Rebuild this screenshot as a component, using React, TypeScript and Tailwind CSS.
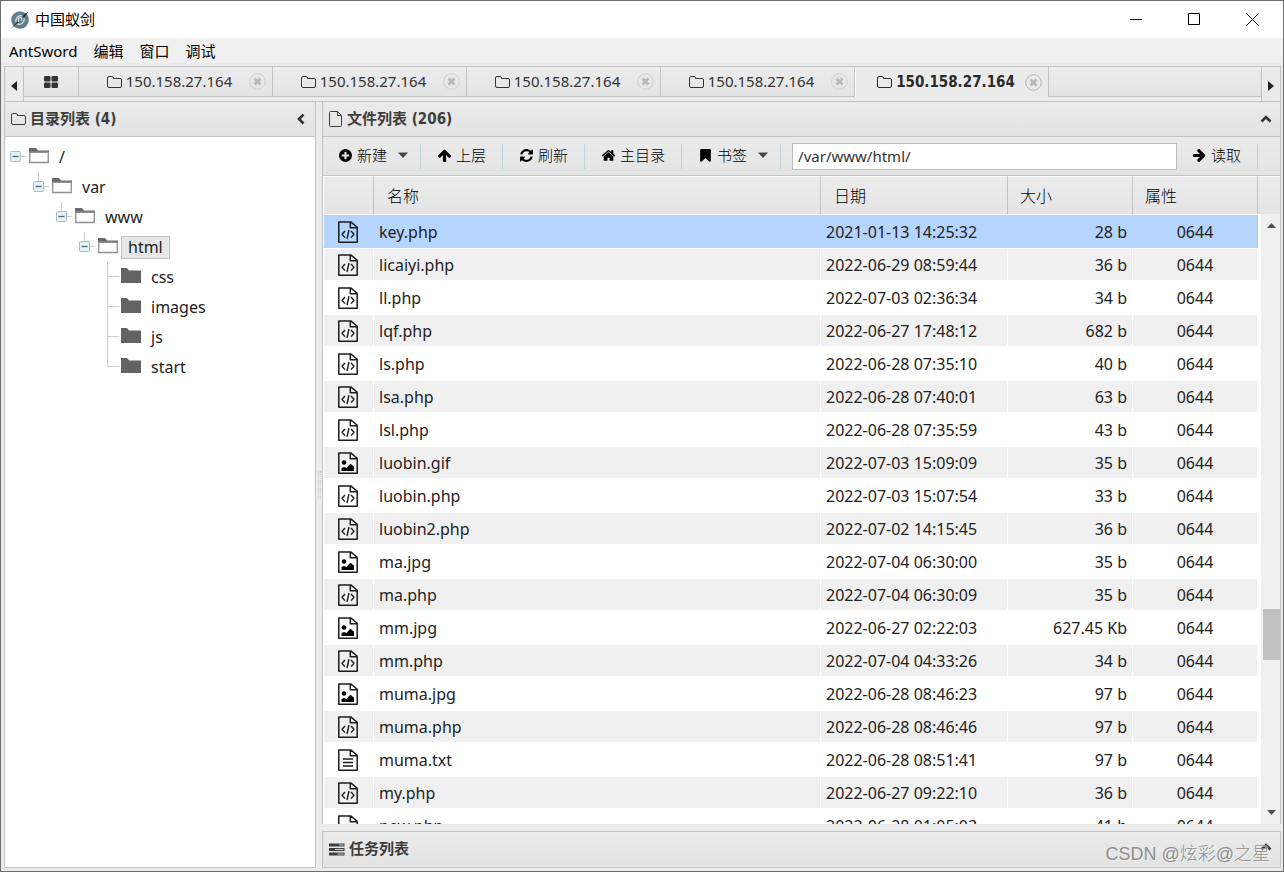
import { useState } from 'react';
import type { ReactNode } from 'react';

type FileKind = 'code' | 'image' | 'text';
type FileRow = { name: string; date: string; size: string; kind: FileKind };

const files: FileRow[] = [
  { name: 'key.php', date: '2021-01-13 14:25:32', size: '28 b', kind: 'code' },
  { name: 'licaiyi.php', date: '2022-06-29 08:59:44', size: '36 b', kind: 'code' },
  { name: 'll.php', date: '2022-07-03 02:36:34', size: '34 b', kind: 'code' },
  { name: 'lqf.php', date: '2022-06-27 17:48:12', size: '682 b', kind: 'code' },
  { name: 'ls.php', date: '2022-06-28 07:35:10', size: '40 b', kind: 'code' },
  { name: 'lsa.php', date: '2022-06-28 07:40:01', size: '63 b', kind: 'code' },
  { name: 'lsl.php', date: '2022-06-28 07:35:59', size: '43 b', kind: 'code' },
  { name: 'luobin.gif', date: '2022-07-03 15:09:09', size: '35 b', kind: 'image' },
  { name: 'luobin.php', date: '2022-07-03 15:07:54', size: '33 b', kind: 'code' },
  { name: 'luobin2.php', date: '2022-07-02 14:15:45', size: '36 b', kind: 'code' },
  { name: 'ma.jpg', date: '2022-07-04 06:30:00', size: '35 b', kind: 'image' },
  { name: 'ma.php', date: '2022-07-04 06:30:09', size: '35 b', kind: 'code' },
  { name: 'mm.jpg', date: '2022-06-27 02:22:03', size: '627.45 Kb', kind: 'image' },
  { name: 'mm.php', date: '2022-07-04 04:33:26', size: '34 b', kind: 'code' },
  { name: 'muma.jpg', date: '2022-06-28 08:46:23', size: '97 b', kind: 'image' },
  { name: 'muma.php', date: '2022-06-28 08:46:46', size: '97 b', kind: 'code' },
  { name: 'muma.txt', date: '2022-06-28 08:51:41', size: '97 b', kind: 'text' },
  { name: 'my.php', date: '2022-06-27 09:22:10', size: '36 b', kind: 'code' },
  { name: 'new.php', date: '2022-06-28 01:05:03', size: '41 b', kind: 'code' },
];

const tree = [
  { name: '/', indent: 'pl-1', open: true },
  { name: 'var', indent: 'pl-[27px]', open: true },
  { name: 'www', indent: 'pl-[50px]', open: true },
  { name: 'html', indent: 'pl-[73px]', open: true },
  { name: 'css', indent: 'pl-[96px]', open: false },
  { name: 'images', indent: 'pl-[96px]', open: false },
  { name: 'js', indent: 'pl-[96px]', open: false },
  { name: 'start', indent: 'pl-[96px]', open: false },
];

const tabs = ['150.158.27.164', '150.158.27.164', '150.158.27.164', '150.158.27.164', '150.158.27.164'];

const headFont = "font-['DejaVu_Sans_Condensed','DejaVu_Sans','Noto_Sans_CJK_SC',sans-serif]";

// Font Awesome 4 glyphs on their 1792 grid
const glyphs = {
  plus: 'M1344 960v-128q0-26-19-45t-45-19h-256v-256q0-26-19-45t-45-19h-128q-26 0-45 19t-19 45v256h-256q-26 0-45 19t-19 45v128q0 26 19 45t45 19h256v256q0 26 19 45t45 19h128q26 0 45-19t19-45v-256h256q26 0 45-19t19-45zm320-64q0 209-103 385.5t-279.5 279.5-385.5 103-385.5-103-279.5-279.5-103-385.5 103-385.5 279.5-279.5 385.5-103 385.5 103 279.5 279.5 103 385.5z',
  up: 'M1675 971q0 51-37 90l-75 75q-38 38-91 38-54 0-90-38l-294-293v704q0 52-37.5 84.5t-90.5 32.5h-128q-53 0-90.5-32.5t-37.5-84.5v-704l-294 293q-36 38-90 38t-90-38l-75-75q-38-38-38-90 0-53 38-91l651-651q35-37 90-37 54 0 91 37l651 651q37 39 37 91z',
  refresh: 'M1639 1056q0 5-1 7-64 268-268 434.5t-478 166.5q-146 0-282.5-55t-243.5-157l-129 129q-19 19-45 19t-45-19-19-45v-448q0-26 19-45t45-19h448q26 0 45 19t19 45-19 45l-137 137q71 66 161 102t187 36q134 0 250-65t186-179q11-17 53-117 8-23 30-23h192q13 0 22.5 9.5t9.5 22.5zm25-800v448q0 26-19 45t-45 19h-448q-26 0-45-19t-19-45 19-45l138-138q-148-137-349-137-134 0-250 65t-186 179q-11 17-53 117-8 23-30 23h-199q-13 0-22.5-9.5t-9.5-22.5v-7q65-268 270-434.5t480-166.5q146 0 284 55.5t245 156.5l130-129q19-19 45-19t45 19 19 45z',
  home: 'M1472 992v480q0 26-19 45t-45 19h-384v-384h-256v384h-384q-26 0-45-19t-19-45v-480q0-1 .5-3t.5-3l575-474 575 474q1 2 1 6zm223-69l-62 74q-8 9-21 11h-3q-13 0-21-7l-692-577-692 577q-12 8-24 7-13-2-21-11l-62-74q-8-10-7-23.5t11-21.5l719-599q32-26 76-26t76 26l244 204v-195q0-14 9-23t23-9h192q14 0 23 9t9 23v408l219 182q10 8 11 21.5t-7 23.5z',
  bookmark: 'M1420 128q23 0 44 9 33 13 52.5 41t19.5 62v1289q0 34-19.5 62t-52.5 41q-19 8-44 8-48 0-83-32l-441-424-441 424q-36 33-83 33-23 0-44-9-33-13-52.5-41t-19.5-62v-1289q0-34 19.5-62t52.5-41q21-9 44-9h1048z',
};

const Glyph = ({ name, className = '' }: { name: keyof typeof glyphs; className?: string }) => (
  <svg viewBox="0 0 1792 1792" className={`size-[15px] shrink-0 ${className}`} fill="currentColor" aria-hidden="true">
    <path d={glyphs[name]} />
  </svg>
);

const FolderOutline = () => (
  <svg viewBox="0 0 15 14" className="h-[14px] w-[15px] shrink-0" fill="none" stroke="currentColor" aria-hidden="true">
    <path d="M.5 3a1.5 1.5 0 0 1 1.5-1.5h3A1.5 1.5 0 0 1 6.5 3v.5H13A1.5 1.5 0 0 1 14.5 5v6a1.5 1.5 0 0 1-1.5 1.5H2A1.5 1.5 0 0 1 .5 11z" />
  </svg>
);

const PageOutline = () => (
  <svg viewBox="0 0 14 16" className="h-4 w-[14px] shrink-0" fill="none" stroke="currentColor" aria-hidden="true">
    <path d="M1.5.5H8.5L12.5 4.5V14.5a1 1 0 0 1-1 1H1.5a1 1 0 0 1-1-1V1.5a1 1 0 0 1 1-1zM8.5.5v4h4" />
  </svg>
);

const Chevron = ({ className = '' }: { className?: string }) => (
  <svg viewBox="0 0 12 12" className={`size-3 ${className}`} fill="none" stroke="#333" strokeWidth="2.6" aria-hidden="true">
    <path d="M1.5 8.5 6 4l4.5 4.5" />
  </svg>
);

const Caret = () => (
  <svg viewBox="0 0 10 6" className="h-[6px] w-[10px]" aria-hidden="true">
    <path d="M0 .5h10L5 6z" fill="#444" />
  </svg>
);

const FileIcon = ({ kind }: { kind: FileKind }) => (
  <svg viewBox="0 0 20 22" className="ml-[14px] h-[22px] w-5" fill="none" stroke="#1c1c1c" strokeWidth="1.5" strokeLinejoin="round" aria-hidden="true">
    <path d="M.8.9H12.8L19.2 6.3V21.2H.8zM12.3.9V6.7H19.2" />
    {kind === 'code' && <path d="M7 10 4 13.3 7 16.6M13 10l3 3.3-3 3.3M11 9 9 18" strokeWidth="1.4" />}
    {kind === 'text' && <path d="M5 10h10M5 13.5h10M5 17h10" strokeWidth="1.4" />}
    {kind === 'image' && (
      <g fill="#000" stroke="none">
        <circle cx="6" cy="10.5" r="2.3" />
        <path d="M3.5 19v-3l2.5-1 2.5 1 3-3.5 1.5-.5 1.5 1.5 1.5 1V19z" />
      </g>
    )}
  </svg>
);

// connector lines plus the collapse box, one row tall
const Joint = ({ row, open }: { row: number; open: boolean }) => (
  <svg viewBox="0 0 20 30" className="h-[30px] w-5 shrink-0" fill="none" stroke="#cfcfcf" aria-hidden="true">
    {row > 0 && <path d={open ? 'M6.5 0V9' : row === tree.length - 1 ? 'M6.5 0V14.5' : 'M6.5 0V30'} />}
    <path d={open ? 'M12 14.5h5' : 'M6.5 14.5h12'} />
    {open && (
      <>
        <rect x="1.5" y="9.5" width="10" height="10" rx="1" fill="#e6eff3" stroke="#a9bcc6" />
        <path d="M3.5 14.5h6" stroke="#45708a" strokeWidth="1.3" />
      </>
    )}
  </svg>
);

const TreeFolder = ({ open }: { open: boolean }) => (
  <svg viewBox="0 0 20 16" className="-mt-[3px] h-4 w-5 shrink-0" aria-hidden="true">
    {open ? (
      <>
        <path d="M0 0h7l2 2.500h11V5H0z" fill="#6a6a6a" />
        <path d="M.75 4v10.500h18.500V4.250H.75" fill="#fff" stroke="#8f8f8f" strokeWidth="1.300" />
      </>
    ) : (
      <path d="M0 0h6l2 2.500h12V15H0z" fill="#636363" />
    )}
  </svg>
);

const PanelHead = ({ icon, title, chevron }: { icon: ReactNode; title: string; chevron: string }) => (
  <header className="flex h-[34px] shrink-0 items-center gap-1 bg-linear-to-b from-[#ebebeb] to-[#e3e3e3] pr-2 pl-[6px] text-[#3d3d3d]">
    {icon}
    <h2 className={`flex-1 text-[15px] leading-5 font-bold ${headFont}`}>{title}</h2>
    <button type="button" aria-label={`收起 ${title}`}>
      <Chevron className={chevron} />
    </button>
  </header>
);

const ToolButton = ({ icon, label, menu }: { icon: ReactNode; label: string; menu?: boolean }) => (
  <button type="button" className="mr-px flex h-[25px] items-center gap-1 border-r border-[#c3d3da] pr-4 pb-[2px] pl-[15px] text-black">
    {icon}
    <span className="font-light whitespace-nowrap">{label}</span>
    {menu && (
      <span className="-mr-1 pl-[7px]">
        <Caret />
      </span>
    )}
  </button>
);

export default function App() {
  const [activeTab, setActiveTab] = useState(4);
  const [selected, setSelected] = useState(0);
  const [folder, setFolder] = useState('html');
  const [path, setPath] = useState('/var/www/html/');

  return (
    <div className="relative flex h-screen flex-col overflow-hidden border border-[#6c6c6c] bg-[#ebebeb] font-['Noto_Sans','Noto_Sans_CJK_SC',sans-serif] text-[#222]">
      {/* Title bar */}
      <div className="flex h-[37px] shrink-0 items-center bg-white pr-[2px] pl-[9px] text-[15px] text-black">
        <svg viewBox="0 0 20 20" className="size-5" aria-hidden="true">
          <circle cx="10" cy="10" r="8.8" fill="#5f7f8c" />
          <path d="M13.5 6.5a5 5 0 0 0-7.5 5.5M6.5 13.5a5 5 0 0 0 7.5-5.5" fill="none" stroke="#cfdde2" strokeWidth="1.3" />
          <path d="M8.5 12V9.5a1.5 1.5 0 0 1 3-1V11" fill="none" stroke="#e5edf0" strokeWidth="1.2" />
          <path d="M1 18.500 7.500 11.500 8.500 12.500zM18.500 1.500 14 8 12 6z" fill="#1f3138" />
        </svg>
        <h1 className="flex-1 pl-[5px]">中国蚁剑</h1>
        <button type="button" aria-label="最小化" className="flex h-full w-[58px] items-center justify-center">
          <svg viewBox="0 0 13 13" className="size-[13px]" stroke="#000"><path d="M0 6.5h12" /></svg>
        </button>
        <button type="button" aria-label="最大化" className="flex h-full w-[58px] items-center justify-center">
          <svg viewBox="0 0 13 13" className="size-[13px]" stroke="#000" fill="none"><path d="M.5.5h11v11H.5z" /></svg>
        </button>
        <button type="button" aria-label="关闭" className="flex h-full w-[58px] items-center justify-center">
          <svg viewBox="0 0 13 13" className="size-[13px]" stroke="#000"><path d="m.5.5 12 12M12.5.5l-12 12" /></svg>
        </button>
      </div>

      {/* Menu bar */}
      <nav className="flex h-[25px] shrink-0 items-center gap-4 bg-[#f0f0f0] px-2 pt-px text-[15px] text-black">
        <button type="button">AntSword</button>
        <button type="button">编辑</button>
        <button type="button">窗口</button>
        <button type="button">调试</button>
      </nav>

      <div className="flex min-h-0 flex-1 flex-col pt-[3px] pr-[2px] pb-[3px] pl-[3px]">
        {/* Tabs */}
        <div className="flex h-9 shrink-0 border border-[#c2c2c2] bg-[#ebebeb] text-[15px] text-[#333]">
          <button type="button" aria-label="向左" className="flex w-[19px] shrink-0 items-center justify-center border-r border-[#c2c2c2]">
            <svg viewBox="0 0 6 10" className="mt-1 h-[10px] w-[6px]"><path d="M6 0v10L0 5z" fill="#222" /></svg>
          </button>
          <div className="flex h-[30px] min-w-0 flex-1 bg-linear-to-b from-[#ececec] to-[#e4e4e4]">
            <button type="button" aria-label="主页" className="flex w-[55px] shrink-0 items-center justify-center border-r border-b border-[#c2c2c2]">
              <svg viewBox="0 0 14 12" className="h-3 w-[14px]" fill="#333">
                <rect width="6.5" height="5.5" rx="1" /><rect x="7.5" width="6.5" height="5.5" rx="1" />
                <rect y="6.5" width="6.5" height="5.5" rx="1" /><rect x="7.5" y="6.5" width="6.5" height="5.5" rx="1" />
              </svg>
            </button>
            {tabs.map((tab, i) => (
              <div
                key={i}
                className={`flex w-[194px] items-center border-r pr-[6px] pl-[11px] ${i === activeTab ? 'border-r-[#c2c2c2] border-l border-l-white bg-[#ebebeb] text-[#2b2b2b]' : 'border-b border-[#c2c2c2]'}`}
              >
                <button type="button" onClick={() => setActiveTab(i)} className="flex min-w-0 flex-1 items-center justify-center gap-1">
                  <FolderOutline />
                  <span className={i === activeTab ? `font-bold ${headFont}` : ''}>{tab}</span>
                </button>
                <button type="button" aria-label="关闭标签" className="shrink-0">
                  <svg viewBox="0 0 17 17" className="size-[17px]" fill="none" stroke={i === activeTab ? '#b5b5b5' : '#cfcfcf'}>
                    <circle cx="8.5" cy="8.5" r="7.8" />
                    <path d="m5.5 5.5 6 6M11.5 5.5l-6 6" stroke="#b8b8b8" strokeWidth="2.8" />
                  </svg>
                </button>
              </div>
            ))}
            <div className="flex-1 border-b border-[#c2c2c2]" />
          </div>
          <button type="button" aria-label="向右" className="flex w-[19px] shrink-0 items-center justify-center border-l border-[#c2c2c2]">
            <svg viewBox="0 0 6 10" className="mt-1 h-[10px] w-[6px]"><path d="M0 0v10l6-5z" fill="#222" /></svg>
          </button>
        </div>

        <div className="flex min-h-0 flex-1">
          {/* Folder tree */}
          <aside className="flex w-[312px] shrink-0 flex-col border border-t-0 border-[#c2c2c2] bg-white">
            <PanelHead icon={<FolderOutline />} title="目录列表 (4)" chevron="-rotate-90" />
            <ul className="flex-1 border-t border-[#c2c2c2] pt-[5px] text-[16px]">
              {tree.map((node, i) => (
                <li key={node.name} className={`flex h-[30px] items-center ${node.indent}`}>
                  <Joint row={i} open={node.open} />
                  <TreeFolder open={node.open} />
                  <button
                    type="button"
                    onClick={() => setFolder(node.name)}
                    className={`ml-[3px] h-[23px] border px-[6px] leading-[21px] ${folder === node.name ? 'border-[#c2c2c2] bg-[#e8e8e8]' : 'border-transparent'}`}
                  >
                    {node.name}
                  </button>
                </li>
              ))}
            </ul>
          </aside>

          <div className="flex w-[6px] shrink-0 items-center justify-center">
            <div className="h-7 w-[3px] border-x border-dotted border-[#c8c8c8]" />
          </div>

          <main className="flex min-w-0 flex-1 flex-col">
            <section className="flex min-h-0 flex-1 flex-col border-x border-[#c2c2c2]">
              <PanelHead icon={<PageOutline />} title="文件列表 (206)" chevron="" />

              {/* Toolbar */}
              <div className="flex h-10 shrink-0 items-center border-y border-[#c2c2c2] bg-linear-to-b from-[#ebebeb] to-[#e4e4e4] text-[15px]">
                <ToolButton icon={<Glyph name="plus" />} label="新建" menu />
                <ToolButton icon={<Glyph name="up" />} label="上层" />
                <ToolButton icon={<Glyph name="refresh" />} label="刷新" />
                <ToolButton icon={<Glyph name="home" />} label="主目录" />
                <ToolButton icon={<Glyph name="bookmark" />} label="书签" menu />
                <input
                  aria-label="路径"
                  value={path}
                  onChange={(e) => setPath(e.target.value)}
                  className="ml-[10px] h-[27px] min-w-0 flex-1 border border-[#bdbdbd] bg-white px-[5px] text-[15px] text-[#333] outline-none"
                />
                <ToolButton icon={<Glyph name="up" className="rotate-90" />} label="读取" />
                <div className="w-[21px]" />
              </div>

              {/* Files */}
              <div className="relative min-h-0 flex-1 overflow-hidden bg-white">
                <table className="w-full table-fixed border-separate border-spacing-0 text-[16px]">
                  <colgroup>
                    <col className="w-[51px]" />
                    <col />
                    <col className="w-[187px]" />
                    <col className="w-[125px]" />
                    <col className="w-[125px]" />
                    <col className="w-[22px]" />
                  </colgroup>
                  <thead>
                    <tr className="h-[39px] text-left text-black *:border-y *:border-y-white *:bg-linear-to-b *:from-[#ececec] *:to-[#e4e4e4] *:font-light">
                      <td className="border-r border-r-[#c2c2c2] border-l border-l-white" />
                      <th scope="col" className="border-r border-r-[#c2c2c2] pl-[13px]">名称</th>
                      <th scope="col" className="border-r border-r-[#c2c2c2] pl-[13px]">日期</th>
                      <th scope="col" className="border-r border-r-[#c2c2c2] pl-3">大小</th>
                      <th scope="col" className="border-r border-r-[#c2c2c2] pl-3">属性</th>
                      <td />
                    </tr>
                  </thead>
                  <tbody>
                    {files.map((file, i) => {
                      const cell =
                        i === selected
                          ? 'border-y border-r border-[#b5d5ff] bg-[#b5d5ff]'
                          : i % 2
                            ? 'border-y border-r border-white bg-[#f0f0f0]'
                            : 'border-y border-r border-white bg-white';
                      return (
                        <tr key={file.name} onClick={() => setSelected(i)} className="h-[33px] leading-6">
                          <td className={`${cell} border-l border-l-white`}><FileIcon kind={file.kind} /></td>
                          <td className={`${cell} pl-[5px]`}>{file.name}</td>
                          <td className={`${cell} pl-[5px] whitespace-nowrap`}>{file.date}</td>
                          <td className={`${cell} pr-[5px] text-right`}>{file.size}</td>
                          <td className={`${cell} text-center`}>0644</td>
                          <td />
                        </tr>
                      );
                    })}
                  </tbody>
                </table>

                {/* Scrollbar lies over the empty last column */}
                <div className="absolute top-[38px] right-0 bottom-0 flex w-[19px] flex-col items-end bg-[#f0f0f0]">
                  <svg viewBox="0 0 17 24" className="h-6 w-[17px]"><path d="M4 14h9L8.5 9z" fill="#505050" /></svg>
                  <div className="grow-[371]" />
                  <div className="h-[51px] w-[17px] bg-[#c1c1c1]" />
                  <div className="grow-[140]" />
                  <svg viewBox="0 0 17 24" className="h-6 w-[17px]"><path d="M4 10h9l-4.5 5z" fill="#505050" /></svg>
                </div>
              </div>
            </section>

            {/* Tasks */}
            <section className="mt-[7px] shrink-0 border border-[#c2c2c2] pb-px">
              <PanelHead
                icon={
                  <svg viewBox="0 0 16 13" className="h-[13px] w-4 shrink-0" aria-hidden="true">
                    <path d="M0 .5h15.5v3H0zM0 5h15.5v3H0zM0 9.5h15.5v3H0z" fill="#3d3d3d" />
                    <path d="M10 1.5h4.5v1H10zM6 6h8.5v1H6zM8.5 10.5h6v1h-6z" fill="#d0d0d0" />
                  </svg>
                }
                title="任务列表"
                chevron="mb-1"
              />
            </section>
          </main>
        </div>
      </div>

      <p className="pointer-events-none absolute right-[13px] bottom-[5px] font-['Liberation_Sans','Noto_Sans_CJK_SC',sans-serif] text-[18px] leading-6 font-light text-[#8e8e8e] [text-shadow:1px_1px_0_#ffffff80]">
        CSDN @炫彩@之星
      </p>
    </div>
  );
}
